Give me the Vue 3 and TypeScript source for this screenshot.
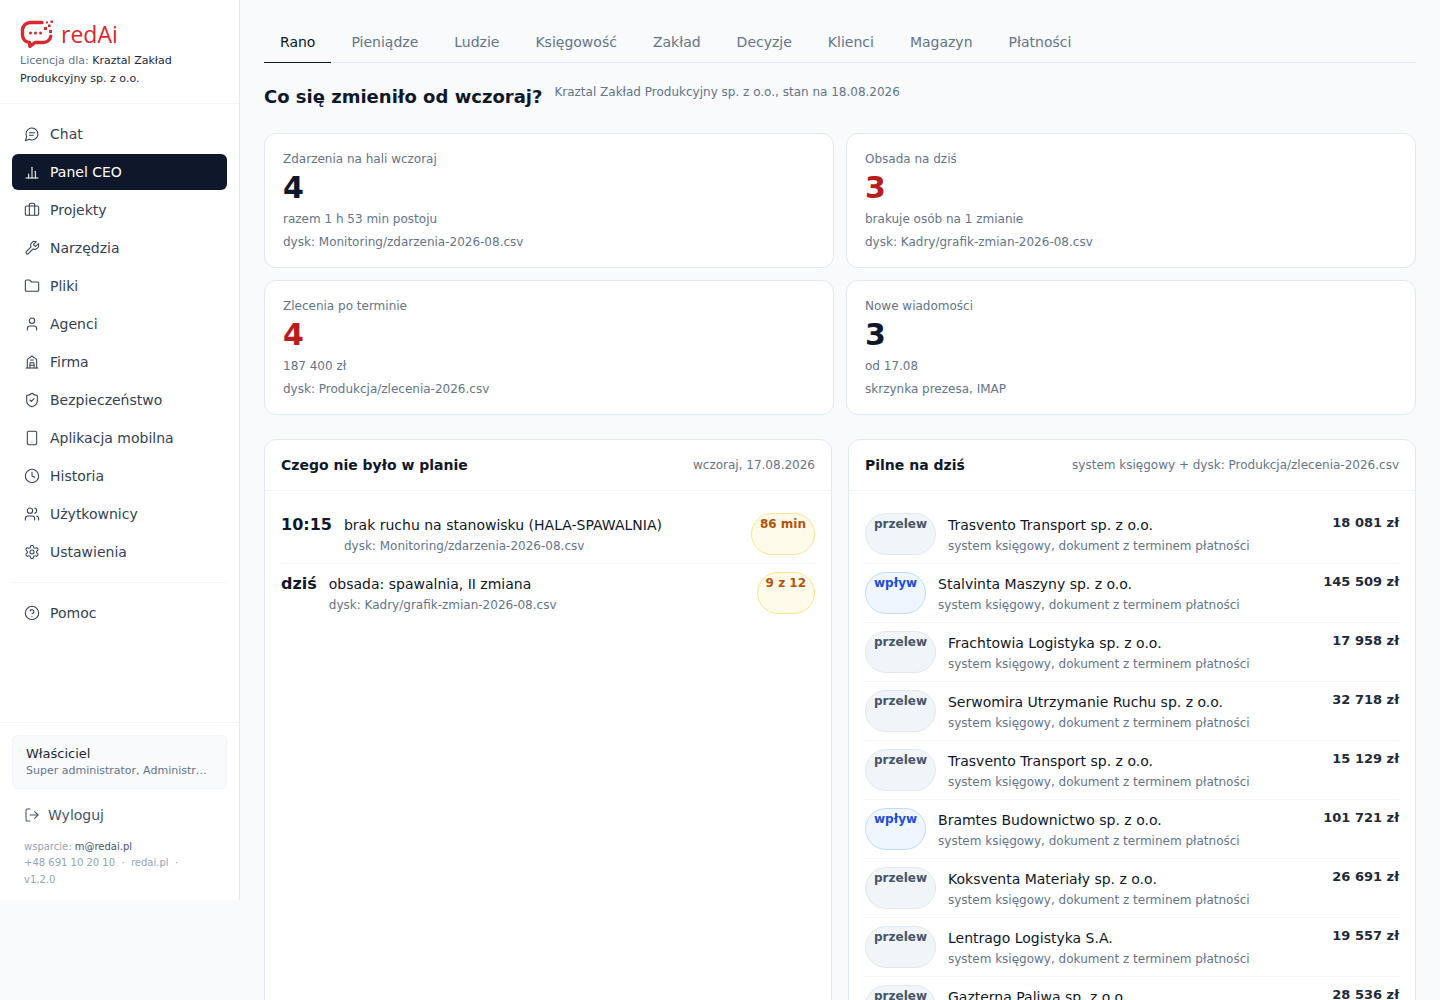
<script setup lang="ts">
interface NavItem {
  label: string;
  paths: string[];
  active?: boolean;
}

const navItems: NavItem[] = [
  { label: "Chat", paths: ["M7.9 20A9 9 0 1 0 4 16.1L2 22Z", "M8 10h8", "M8 14h6"] },
  { label: "Panel CEO", active: true, paths: ["M3 21h18", "M7 21v-6", "M12 21V5", "M17 21v-10"] },
  { label: "Projekty", paths: ["M16 20V4a2 2 0 0 0-2-2h-4a2 2 0 0 0-2 2v16", "M4 6h16a2 2 0 0 1 2 2v10a2 2 0 0 1-2 2H4a2 2 0 0 1-2-2V8a2 2 0 0 1 2-2z"] },
  { label: "Narzędzia", paths: ["M14.7 6.3a1 1 0 0 0 0 1.4l1.6 1.6a1 1 0 0 0 1.4 0l3.77-3.77a6 6 0 0 1-7.94 7.94l-6.91 6.91a2.12 2.12 0 0 1-3-3l6.91-6.91a6 6 0 0 1 7.94-7.94l-3.76 3.76z"] },
  { label: "Pliki", paths: ["M20 20a2 2 0 0 0 2-2V8a2 2 0 0 0-2-2h-7.9a2 2 0 0 1-1.69-.9L9.6 3.9A2 2 0 0 0 7.93 3H4a2 2 0 0 0-2 2v13a2 2 0 0 0 2 2Z"] },
  { label: "Agenci", paths: ["M19 21v-2a4 4 0 0 0-4-4H9a4 4 0 0 0-4 4v2", "M16 7a4 4 0 1 1-8 0 4 4 0 0 1 8 0z"] },
  { label: "Firma", paths: ["M3 21h18", "M5 21V8l7-5 7 5v13", "M9 21v-8h6v8", "M9 17h6", "M10 9h4"] },
  { label: "Bezpieczeństwo", paths: ["M20 13c0 5-3.5 7.5-7.66 8.95a1 1 0 0 1-.67-.01C7.5 20.5 4 18 4 13V6a1 1 0 0 1 1-1c2 0 4.5-1.2 6.24-2.72a1.17 1.17 0 0 1 1.52 0C14.51 3.81 17 5 19 5a1 1 0 0 1 1 1z", "m9 12 2 2 4-4"] },
  { label: "Aplikacja mobilna", paths: ["M7 2h10a2 2 0 0 1 2 2v16a2 2 0 0 1-2 2H7a2 2 0 0 1-2-2V4a2 2 0 0 1 2-2z", "M12 18h.01"] },
  { label: "Historia", paths: ["M22 12a10 10 0 1 1-20 0 10 10 0 0 1 20 0z", "M12 6v6l4 2"] },
  { label: "Użytkownicy", paths: ["M16 21v-2a4 4 0 0 0-4-4H6a4 4 0 0 0-4 4v2", "M13 7a4 4 0 1 1-8 0 4 4 0 0 1 8 0z", "M22 21v-2a4 4 0 0 0-3-3.87", "M16 3.13a4 4 0 0 1 0 7.75"] },
  { label: "Ustawienia", paths: ["M12.22 2h-.44a2 2 0 0 0-2 2v.18a2 2 0 0 1-1 1.73l-.43.25a2 2 0 0 1-2 0l-.15-.08a2 2 0 0 0-2.73.73l-.22.38a2 2 0 0 0 .73 2.73l.15.1a2 2 0 0 1 1 1.72v.51a2 2 0 0 1-1 1.74l-.15.09a2 2 0 0 0-.73 2.73l.22.38a2 2 0 0 0 2.73.73l.15-.08a2 2 0 0 1 2 0l.43.25a2 2 0 0 1 1 1.73V20a2 2 0 0 0 2 2h.44a2 2 0 0 0 2-2v-.18a2 2 0 0 1 1-1.73l.43-.25a2 2 0 0 1 2 0l.15.08a2 2 0 0 0 2.73-.73l.22-.39a2 2 0 0 0-.73-2.73l-.15-.08a2 2 0 0 1-1-1.74v-.5a2 2 0 0 1 1-1.74l.15-.09a2 2 0 0 0 .73-2.73l-.22-.38a2 2 0 0 0-2.73-.73l-.15.08a2 2 0 0 1-2 0l-.43-.25a2 2 0 0 1-1-1.73V4a2 2 0 0 0-2-2z", "M15 12a3 3 0 1 1-6 0 3 3 0 0 1 6 0z"] },
];

const helpIcon = ["M22 12a10 10 0 1 1-20 0 10 10 0 0 1 20 0z", "M9.09 9a3 3 0 0 1 5.83 1c0 2-3 3-3 3", "M12 17h.01"];
const logoutIcon = ["M9 21H5a2 2 0 0 1-2-2V5a2 2 0 0 1 2-2h4", "m16 17 5-5-5-5", "M21 12H9"];

const tabs = ["Rano", "Pieniądze", "Ludzie", "Księgowość", "Zakład", "Decyzje", "Klienci", "Magazyn", "Płatności"];

const stats = [
  { label: "Zdarzenia na hali wczoraj", value: "4", alert: false, note: "razem 1 h 53 min postoju", src: "dysk: Monitoring/zdarzenia-2026-08.csv" },
  { label: "Obsada na dziś", value: "3", alert: true, note: "brakuje osób na 1 zmianie", src: "dysk: Kadry/grafik-zmian-2026-08.csv" },
  { label: "Zlecenia po terminie", value: "4", alert: true, note: "187 400 zł", src: "dysk: Produkcja/zlecenia-2026.csv" },
  { label: "Nowe wiadomości", value: "3", alert: false, note: "od 17.08", src: "skrzynka prezesa, IMAP" },
];

const events = [
  { time: "10:15", title: "brak ruchu na stanowisku (HALA-SPAWALNIA)", src: "dysk: Monitoring/zdarzenia-2026-08.csv", badge: "86 min" },
  { time: "dziś", title: "obsada: spawalnia, II zmiana", src: "dysk: Kadry/grafik-zmian-2026-08.csv", badge: "9 z 12" },
];

const payments = [
  { kind: "przelew", name: "Trasvento Transport sp. z o.o.", amount: "18 081 zł" },
  { kind: "wpływ", name: "Stalvinta Maszyny sp. z o.o.", amount: "145 509 zł" },
  { kind: "przelew", name: "Frachtowia Logistyka sp. z o.o.", amount: "17 958 zł" },
  { kind: "przelew", name: "Serwomira Utrzymanie Ruchu sp. z o.o.", amount: "32 718 zł" },
  { kind: "przelew", name: "Trasvento Transport sp. z o.o.", amount: "15 129 zł" },
  { kind: "wpływ", name: "Bramtes Budownictwo sp. z o.o.", amount: "101 721 zł" },
  { kind: "przelew", name: "Koksventa Materiały sp. z o.o.", amount: "26 691 zł" },
  { kind: "przelew", name: "Lentrago Logistyka S.A.", amount: "19 557 zł" },
  { kind: "przelew", name: "Gazterna Paliwa sp. z o.o.", amount: "28 536 zł" },
];
</script>

<template>
  <div class="app">
    <aside class="sidebar">
      <div class="brand">
        <div class="logo">
          <svg class="logo-mark" viewBox="0 0 34 30" width="34" height="30" fill="none">
            <path d="M22 3.5H10.5C5.8 3.5 2.5 6.8 2.5 11.3v4.4c0 4.3 2.8 7.4 7 7.8l.4 3.8 5.2-3.8h8c4 0 7-2.6 7.7-6.2" stroke="#d9282f" stroke-width="3.4" stroke-linejoin="round" stroke-linecap="round" />
            <circle cx="10.5" cy="14" r="1.5" fill="#d9282f" />
            <circle cx="15.5" cy="14" r="1.5" fill="#d9282f" />
            <circle cx="20.5" cy="14" r="1.5" fill="#d9282f" />
            <rect x="24" y="8" width="3" height="3" fill="#d9282f" />
            <rect x="28" y="5.5" width="2.6" height="2.6" fill="#d9282f" />
            <rect x="29" y="11" width="3" height="3" fill="#d9282f" />
            <rect x="26" y="2.5" width="2" height="2" fill="#d9282f" />
            <rect x="30.5" y="1.5" width="2.4" height="2.4" fill="#d9282f" />
          </svg>
          <span class="logo-text">redAi</span>
        </div>
        <p class="licence">Licencja dla: <span>Kraztal Zakład Produkcyjny sp. z o.o.</span></p>
      </div>

      <nav class="nav">
        <a v-for="item in navItems" :key="item.label" class="nav-item" :class="{ active: item.active }">
          <svg class="icon" viewBox="0 0 24 24" fill="none">
            <path v-for="d in item.paths" :key="d" :d="d" />
          </svg>
          {{ item.label }}
        </a>
        <div class="nav-sep"></div>
        <a class="nav-item">
          <svg class="icon" viewBox="0 0 24 24" fill="none">
            <path v-for="d in helpIcon" :key="d" :d="d" />
          </svg>
          Pomoc
        </a>
      </nav>

      <div class="side-foot">
        <div class="user-card">
          <div class="user-name">Właściciel</div>
          <div class="user-role">Super administrator, Administrator</div>
        </div>
        <a class="logout">
          <svg class="icon" viewBox="0 0 24 24" fill="none">
            <path v-for="d in logoutIcon" :key="d" :d="d" />
          </svg>
          Wyloguj
        </a>
        <p class="support">
          wsparcie: <span>m@redai.pl</span><br />
          +48 691 10 20 10 &nbsp;·&nbsp; redai.pl &nbsp;·<br />
          v1.2.0
        </p>
      </div>
    </aside>

    <main class="main">
      <div class="tabs">
        <a v-for="(tab, i) in tabs" :key="tab" class="tab" :class="{ active: i === 0 }">{{ tab }}</a>
      </div>

      <div class="heading">
        <h1>Co się zmieniło od wczoraj?</h1>
        <span>Kraztal Zakład Produkcyjny sp. z o.o., stan na 18.08.2026</span>
      </div>

      <section class="stats">
        <div v-for="s in stats" :key="s.label" class="stat">
          <div class="stat-label">{{ s.label }}</div>
          <div class="stat-value" :class="{ alert: s.alert }">{{ s.value }}</div>
          <div class="stat-note">{{ s.note }}</div>
          <div class="stat-src">{{ s.src }}</div>
        </div>
      </section>

      <section class="panels">
        <div class="panel">
          <header class="panel-head">
            <h2>Czego nie było w planie</h2>
            <span>wczoraj, 17.08.2026</span>
          </header>
          <div class="panel-body">
            <div v-for="e in events" :key="e.time" class="row">
              <b class="time">{{ e.time }}</b>
              <div class="row-text">
                <div class="row-title">{{ e.title }}</div>
                <div class="row-sub">{{ e.src }}</div>
              </div>
              <span class="pill amber">{{ e.badge }}</span>
            </div>
          </div>
        </div>

        <div class="panel">
          <header class="panel-head">
            <h2>Pilne na dziś</h2>
            <span>system księgowy + dysk: Produkcja/zlecenia-2026.csv</span>
          </header>
          <div class="panel-body">
            <div v-for="p in payments" :key="p.name + p.amount" class="row">
              <span class="pill" :class="p.kind === 'wpływ' ? 'blue' : 'grey'">{{ p.kind }}</span>
              <div class="row-text">
                <div class="row-title">{{ p.name }}</div>
                <div class="row-sub">system księgowy, dokument z terminem płatności</div>
              </div>
              <b class="amount">{{ p.amount }}</b>
            </div>
          </div>
        </div>
      </section>
    </main>
  </div>
</template>

<style>
html,
body {
  background: #f8fafc;
}
</style>

<style scoped>
.app {
  display: flex;
  align-items: flex-start;
  height: 1000px;
  overflow: hidden;
  background: #f8fafc;
  font-family: "DejaVu Sans", sans-serif;
  color: #0f172a;
}

.sidebar {
  flex: none;
  display: flex;
  flex-direction: column;
  width: 240px;
  height: 900px;
  box-sizing: border-box;
  background: #fff;
  border-right: 1px solid #e2e8f0;
}

.brand {
  padding: 18px 20px 16px;
  border-bottom: 1px solid #f1f5f9;
}
.logo {
  display: flex;
  align-items: center;
  gap: 7px;
  height: 32px;
}
.logo-mark {
  flex: none;
}
.logo-text {
  font-family: "Open Sans", sans-serif;
  font-size: 23px;
  font-weight: 500;
  color: #d9282f;
  line-height: 1;
}
.licence {
  margin: 2px 0 0;
  font-size: 11px;
  line-height: 17.5px;
  color: #64748b;
}
.licence span {
  color: #1e293b;
}

.nav {
  padding: 12px 12px 0;
  display: flex;
  flex-direction: column;
  gap: 2px;
}
.nav-item {
  display: flex;
  align-items: center;
  gap: 10px;
  height: 36px;
  padding: 0 12px;
  font-size: 14px;
  color: #334155;
  border-radius: 6px;
}
.nav-item.active {
  background: #0f172a;
  color: #fff;
}
.nav-sep {
  height: 1px;
  margin: 10px 0;
  background: #f1f5f9;
}
.icon {
  flex: none;
  width: 16px;
  height: 16px;
  stroke: currentColor;
  stroke-width: 1.6;
  stroke-linecap: round;
  stroke-linejoin: round;
}

.side-foot {
  margin-top: auto;
  padding: 12px;
  border-top: 1px solid #f1f5f9;
}
.user-card {
  height: 54px;
  box-sizing: border-box;
  padding: 9px 13px;
  background: #f8fafc;
  border: 1px solid #f1f5f9;
  border-radius: 6px;
}
.user-name {
  font-size: 13px;
  line-height: 18px;
  color: #1e293b;
}
.user-role {
  font-size: 11px;
  line-height: 16px;
  color: #64748b;
  white-space: nowrap;
  overflow: hidden;
  text-overflow: ellipsis;
}
.logout {
  display: flex;
  align-items: center;
  gap: 8px;
  height: 36px;
  margin-top: 8px;
  padding: 0 12px;
  font-size: 14px;
  color: #475569;
}
.support {
  margin: 6px 12px 0;
  font-size: 10px;
  line-height: 16.5px;
  color: #94a3b8;
}
.support span {
  color: #475569;
}

.main {
  flex: 1;
  min-width: 0;
  padding: 24px;
}

.tabs {
  display: flex;
  gap: 4px;
  border-bottom: 1px solid #e2e8f0;
}
.tab {
  padding: 8px 16px 10px;
  margin-bottom: -1px;
  font-size: 14px;
  line-height: 20px;
  color: #64748b;
  border-bottom: 1px solid transparent;
}
.tab.active {
  color: #0f172a;
  border-bottom-color: #0f172a;
}

.heading {
  display: flex;
  align-items: flex-start;
  gap: 12px;
  margin-top: 20px;
  margin-bottom: 22px;
}
.heading h1 {
  margin: 0;
  font-size: 18px;
  line-height: 28px;
  font-weight: 700;
}
.heading span {
  font-size: 12px;
  line-height: 18px;
  color: #64748b;
}

.stats {
  display: grid;
  grid-template-columns: 1fr 1fr;
  gap: 12px;
}
.stat {
  padding: 16px 18px;
  background: #fff;
  border: 1px solid #e2e8f0;
  border-radius: 12px;
}
.stat-label {
  font-size: 12px;
  line-height: 18px;
  color: #64748b;
}
.stat-value {
  font-size: 30px;
  font-weight: 700;
  line-height: 36px;
  margin-top: 2px;
}
.stat-value.alert {
  color: #b91c1c;
}
.stat-note {
  margin-top: 4px;
  font-size: 12px;
  line-height: 18px;
  color: #64748b;
}
.stat-src {
  margin-top: 5px;
  font-size: 12px;
  line-height: 18px;
  color: #64748b;
}

.panels {
  display: grid;
  grid-template-columns: 1fr 1fr;
  gap: 16px;
  margin-top: 24px;
}
.panel {
  background: #fff;
  border: 1px solid #e2e8f0;
  border-radius: 12px;
}
.panel-head {
  display: flex;
  align-items: center;
  justify-content: space-between;
  height: 50px;
  padding: 0 16px;
  border-bottom: 1px solid #f1f5f9;
}
.panel-head h2 {
  margin: 0;
  font-size: 14px;
  font-weight: 700;
}
.panel-head span {
  font-size: 12px;
  color: #64748b;
}
.panel-body {
  padding: 14px 16px;
}
.row {
  display: flex;
  align-items: stretch;
  gap: 12px;
  padding: 8px 0;
  border-bottom: 1px solid #f1f5f9;
}
.row:last-child {
  border-bottom: none;
}
.time {
  font-size: 16px;
  line-height: 24px;
}
.row-text {
  flex: 1;
  min-width: 0;
}
.row-title {
  font-size: 14px;
  line-height: 24px;
  color: #0f172a;
}
.row-sub {
  font-size: 12px;
  line-height: 18px;
  color: #64748b;
}
.pill {
  flex: none;
  box-sizing: border-box;
  padding: 2px 8px;
  font-size: 12px;
  line-height: 16px;
  font-weight: 700;
  border: 1px solid;
  border-radius: 999px;
}
.pill.amber {
  background: #fffbeb;
  border-color: #fde68a;
  color: #b45309;
}
.pill.grey {
  background: #f1f5f9;
  border-color: #e2e8f0;
  color: #475569;
}
.pill.blue {
  background: #eff6ff;
  border-color: #bfdbfe;
  color: #1d4ed8;
}
.amount {
  font-size: 13px;
  line-height: 20px;
  color: #1e293b;
}
</style>
